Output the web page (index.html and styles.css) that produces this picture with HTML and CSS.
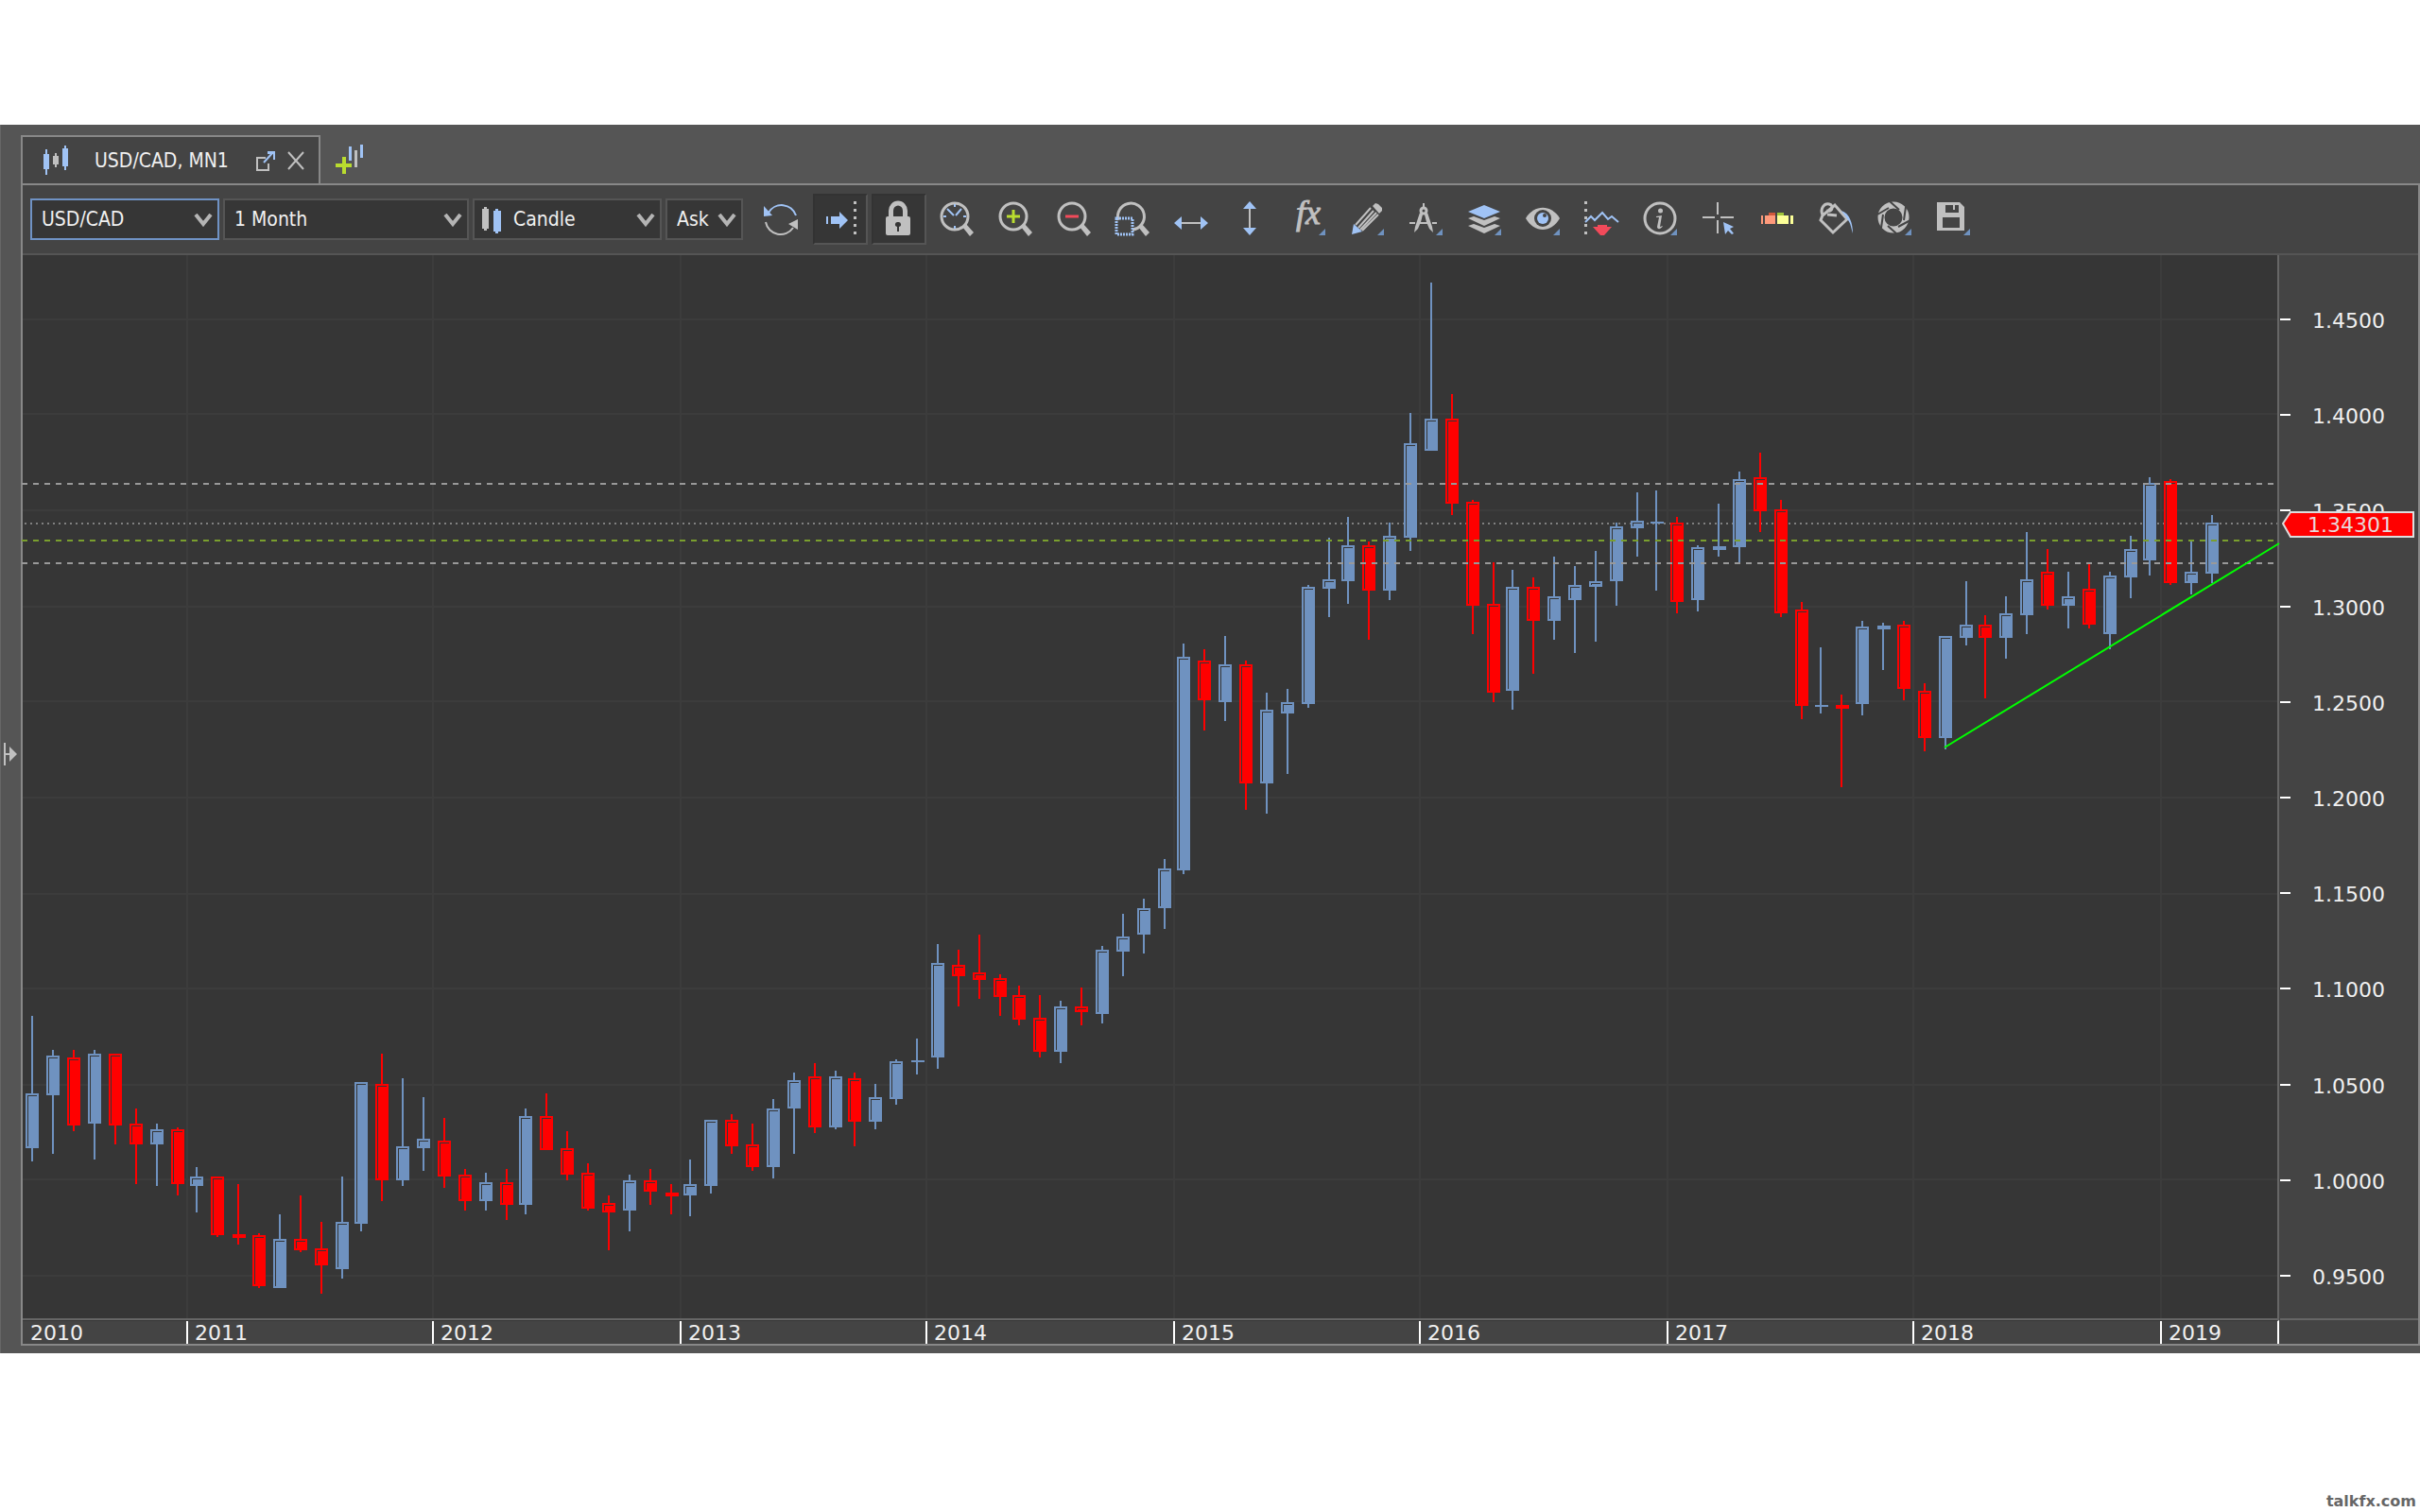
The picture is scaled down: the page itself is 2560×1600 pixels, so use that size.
FILE: index.html
```html
<!DOCTYPE html>
<html lang="en">
<head>
<meta charset="utf-8">
<title>USD/CAD, MN1</title>
<link rel="stylesheet" href="styles.css">
</head>
<body>
<main class="window">
  <nav class="tabs">
    <div class="tab">
      <svg class="tab-icon" width="26" height="32" viewBox="46 155 26 32" aria-hidden="true">
        <g class="blue-fill"><rect x="46" y="164" width="6" height="16"/><rect x="48" y="159" width="2" height="27"/><rect x="66" y="158" width="6" height="19"/><rect x="68" y="155" width="2" height="26"/></g>
        <g class="grey-fill"><rect x="56" y="166" width="6" height="9"/><rect x="58" y="163" width="2" height="15"/></g>
      </svg>
      <span class="tab-title">USD/CAD, MN1</span>
      <button class="tab-button" type="button" aria-label="Detach">
        <svg width="20" height="22" viewBox="270 157 20 22"><path class="grey-line" d="M280 165h-9v13h12v-7"/><path class="blue-line" d="M278 170l10-11"/><path class="blue-fill" d="M282 158h8v9h-2v-6h-6z"/></svg>
      </button>
      <button class="tab-button close" type="button" aria-label="Close">
        <svg width="18" height="20" viewBox="303 160 18 20"><path class="grey-line" d="M304 161l16 18M320 161l-16 18"/></svg>
      </button>
    </div>
    <button class="tab-button new-chart" type="button" aria-label="New chart">
      <svg width="30" height="32" viewBox="355 152 30 32"><path class="lime-fill" d="M362 165h4v7h6v4h-6v7h-4v-7h-7v-4h7z"/><path class="blue-fill" d="M369 154h3v15h-3zM381 152h3v14h-3z"/><path class="grey-fill" d="M375 158h3v18h-3z"/></svg>
    </button>
  </nav>

  <div class="body">
    <button class="splitter" type="button" aria-label="Expand panel">
      <svg width="14" height="24" viewBox="0 0 14 24"><path class="grey-fill" d="M0 0h2v11h4V4l8 8-8 8v-7H2v11H0z"/></svg>
    </button>
    <section class="panel">
      <div class="toolbar">
        <div class="field instrument">
          <select aria-label="Instrument"><option>USD/CAD</option></select>
          <svg class="chevron" width="20" height="14" viewBox="0 0 20 14"><path d="M2 1l8 10 8-10"/></svg>
        </div>
        <div class="field period">
          <select aria-label="Period"><option>1 Month</option></select>
          <svg class="chevron" width="20" height="14" viewBox="0 0 20 14"><path d="M2 1l8 10 8-10"/></svg>
        </div>
        <div class="field style">
          <svg class="style-icon" width="20" height="30" viewBox="510 218 20 30"><path class="grey-fill" d="M510 221h2v-2h3v2h2v21h-2v2h-3v-2h-2z"/><path class="blue-fill" d="M522 223h2v-2h3v2h3v22h-3v2h-3v-2h-2z"/></svg>
          <select aria-label="Chart type"><option>Candle</option></select>
          <svg class="chevron" width="20" height="14" viewBox="0 0 20 14"><path d="M2 1l8 10 8-10"/></svg>
        </div>
        <div class="field side">
          <select aria-label="Price side"><option>Ask</option></select>
          <svg class="chevron" width="20" height="14" viewBox="0 0 20 14"><path d="M2 1l8 10 8-10"/></svg>
        </div>
        <div class="tools">
          <button type="button" aria-label="Refresh"><svg viewBox="0 0 38 38"><path class="blue-line" d="M5 12a16 16 0 0 1 29 3"/><path class="blue-fill" d="M0 5v11l9-1z"/><path class="grey-line" d="M2 22a16 16 0 0 0 29 6"/><path class="grey-fill" d="M36 30V19l-10 5z"/></svg></button>
          <button type="button" class="on" aria-label="Autoshift" aria-pressed="true"><svg viewBox="0 0 38 38"><path class="blue-fill" d="M4 16h2v8H4zM9 16h9v-5l9 9-9 9v-5H9z"/><path class="grey-fill" d="M33 0h3v3h-3zM33 8h3v3h-3zM33 16h3v3h-3zM33 24h3v3h-3zM33 32h3v3h-3z"/></svg></button>
          <button type="button" class="on" aria-label="Lock" aria-pressed="true"><svg viewBox="0 0 38 38"><path class="grey-line thick" d="M10.500 17v-7a7.500 8 0 0 1 15 0v7"/><path class="grey-fill" fill-rule="evenodd" d="M7 16h22a2 2 0 0 1 2 2v16a2 2 0 0 1-2 2H7a2 2 0 0 1-2-2V18a2 2 0 0 1 2-2zm11 6a2.500 2.500 0 0 0-1 5v5h2v-5a2.500 2.500 0 0 0-1-5z"/></svg></button>
          <button type="button" aria-label="Zoom time"><svg viewBox="0 0 38 38"><circle class="grey-line lens" cx="16" cy="16" r="14"/><path class="grey-fill" d="M24 27l4-3 8 9-4 4z"/><path class="blue-line" d="M8 8l7 7M23 8l-6 7M16 3v3M16 26v3M4 16h3M25 16h3"/></svg></button>
          <button type="button" aria-label="Zoom in"><svg viewBox="0 0 38 38"><circle class="grey-line lens" cx="16" cy="16" r="14"/><path class="grey-fill" d="M24 27l4-3 8 9-4 4z"/><path class="lime-fill" d="M14.500 9h3v5.500H23v3h-5.500V23h-3v-5.500H9v-3h5.500z"/></svg></button>
          <button type="button" aria-label="Zoom out"><svg viewBox="0 0 38 38"><circle class="grey-line lens" cx="16" cy="16" r="14"/><path class="grey-fill" d="M24 27l4-3 8 9-4 4z"/><path class="coral-fill" d="M9 14.500h14v3H9z"/></svg></button>
          <button type="button" aria-label="Zoom to area"><svg viewBox="0 0 38 38"><path class="grey-line lens" d="M3 20a14 14 0 1 1 15 10"/><path class="grey-fill" d="M24 27l4-3 8 9-4 4z"/><rect class="blue-line dotted" x="1" y="18" width="17" height="17"/></svg></button>
          <button type="button" aria-label="Fit horizontally"><svg viewBox="0 0 38 38"><path class="grey-line" d="M7 23h22"/><path class="blue-fill" d="M0 23l8-7v14zM36 23l-8-7v14z"/></svg></button>
          <button type="button" aria-label="Fit vertically"><svg viewBox="0 0 38 38"><path class="grey-line" d="M18 7v22"/><path class="blue-fill" d="M18 0l7 8H11zM18 36l7-8H11z"/></svg></button>
          <button type="button" aria-label="Indicators"><svg viewBox="0 0 38 38"><text class="fx" x="5" y="24">fx</text><path class="corner" d="M36 29v7h-7z"/></svg></button>
          <button type="button" aria-label="Draw"><svg viewBox="0 0 38 38"><path class="grey-fill" d="M24 5l3-3 3 1 4 4v3l-3 3z"/><path class="grey-line" d="M22 7L6 25M30 14L13 31M25 10L9 28M28 12L11 30"/><path class="blue-fill" d="M4 24l9 8-11 3z"/><path class="corner" d="M36 29v7h-7z"/></svg></button>
          <button type="button" aria-label="Measure"><svg viewBox="0 0 38 38"><path class="grey-line" d="M16 2v5M1 23h6M12 23h8M25 23h5"/><circle class="grey-line mid" cx="16" cy="10" r="3"/><path class="grey-fill" d="M12 12l3 2-2 8-3 7-4 4 1-6zM20 12l-3 2 2 8 3 7 4 4-1-6z"/><path class="corner" d="M36 29v7h-7z"/></svg></button>
          <button type="button" aria-label="Layers"><svg viewBox="0 0 38 38"><path class="blue-fill" d="M18 4l17 7-17 7L1 11z"/><path class="grey-fill" d="M1 18l6-2 11 4 11-4 6 2-17 8zM1 26l6-2 11 4 11-4 6 2-17 8z"/><path class="corner" d="M36 29v7h-7z"/></svg></button>
          <button type="button" aria-label="Visibility"><svg viewBox="0 0 38 38"><path class="grey-fill" d="M0 18C9 3 27 3 36 18 27 34 9 34 0 18z"/><circle class="hole" cx="18" cy="18" r="9"/><circle class="blue-fill" cx="18" cy="18" r="6"/><circle class="hole" cx="20" cy="15" r="2"/><path class="corner" d="M36 29v7h-7z"/></svg></button>
          <button type="button" aria-label="Trade levels"><svg viewBox="0 0 38 38"><path class="grey-fill" d="M0 0h3v3H0zM0 8h3v3H0zM0 16h3v3H0zM0 24h3v3H0zM0 32h3v3H0z"/><path class="blue-line" d="M1 22l6-6 4 4 8-8 6 7 4-3 7 6"/><path class="coral-fill" d="M9 27h5v-2h10v2h5l-8 9h-4z"/></svg></button>
          <button type="button" aria-label="Information"><svg viewBox="0 0 38 38"><circle class="grey-line lens" cx="18" cy="18" r="16"/><circle class="grey-fill" cx="18.500" cy="10" r="2.500"/><path class="grey-fill" d="M14 16l6-1-2 12 3-1c-2 4-6 4-6 1l2-10h-3z"/><path class="corner" d="M36 29v7h-7z"/></svg></button>
          <button type="button" aria-label="Crosshair"><svg viewBox="0 0 38 38"><path class="grey-line" d="M17 1v13M17 20v14M1 17h13M20 17h14"/><path class="blue-fill" d="M23 22l11 5-4 2 4 5-2 1-4-4-3 4z"/></svg></button>
          <button type="button" aria-label="Color scheme"><svg viewBox="0 0 38 38"><path fill="#ff9a7b" d="M1 15h2v9H1zM5 15h11v9H5z"/><path fill="#d0583c" d="M9 12h7v3H9z"/><path fill="#fcff98" d="M18 15h12v9H18zM32 15h3v9h-3z"/><path fill="#9ec43a" d="M18 12h7v3h-7z"/></svg></button>
          <button type="button" aria-label="Fill"><svg viewBox="0 0 38 38"><path class="grey-line mid" d="M4 15L17 4l13 15-15 14L2 20zM4 15c-3-8 2-13 7-12 5 1 4 9-3 7M9 14l10 1"/><path class="blue-fill" d="M24 10c9 3 12 14 12 24-2-6-2-10-5-14z"/></svg></button>
          <button type="button" aria-label="Snapshot"><svg viewBox="0 0 38 38"><circle class="grey-line iris" cx="17" cy="17" r="13"/><path class="cut" d="M13 0l10 9M30 6l-2 14M35 20l-13 7M21 35L11 26M4 28l2-14M0 14l12-7"/><path class="corner" d="M36 29v7h-7z"/></svg></button>
          <button type="button" aria-label="Save"><svg viewBox="0 0 38 38"><path class="grey-fill" fill-rule="evenodd" d="M1 1h24l5 5v25H1zM10 4v8h14V4h-4v5h-2V4zM7 17v11h18V17z"/><path class="corner" d="M36 29v7h-7z"/></svg></button>
        </div>
      </div>

      <div class="chart">
        <div class="plot">
          <svg id="plot" viewBox="24 270 2385 1125" preserveAspectRatio="none" role="img" aria-label="USD/CAD monthly candles">
            <g id="grid"></g>
            <path class="dots" d="M24 554H2409"/>
            <g id="candles"></g>
            <path class="dash" d="M23 512H2406M23 596H2406"/>
            <path class="dash pivot" d="M23 572H2406"/>
            <path class="trend" d="M2057 791L2411 575"/>
          </svg>
        </div>
        <div class="prices">
          <ul>
            <li>1.4500</li><li>1.4000</li><li>1.3500</li><li>1.3000</li><li>1.2500</li><li>1.2000</li><li>1.1500</li><li>1.1000</li><li>1.0500</li><li>1.0000</li><li>0.9500</li>
          </ul>
          <div class="tag">
            <svg width="140" height="28" viewBox="0 0 140 28" aria-hidden="true"><path d="M1 13L9 1h130v26H9z"/></svg>
            <span>1.34301</span>
          </div>
        </div>
        <ol class="years">
          <li>2010</li><li>2011</li><li>2012</li><li>2013</li><li>2014</li><li>2015</li><li>2016</li><li>2017</li><li>2018</li><li>2019</li>
        </ol>
      </div>
    </section>
  </div>
</main>
<footer class="credit">talkfx.com</footer>
<script src="chart.js"></script>
</body>
</html>
```

FILE: styles.css
```css
* { box-sizing: border-box; }

body {
  margin: 0;
  min-height: 100vh;
  display: flex;
  flex-direction: column;
  padding-top: 132px;
  background: #fff;
  color: #f0f0f0;
  font-family: "DejaVu Sans Condensed", "DejaVu Sans", sans-serif;
  font-size: 21px;
}

button, select { font: inherit; color: inherit; }
button { padding: 0; border: 0; background: none; }
svg { display: block; }
ul, ol { margin: 0; padding: 0; list-style: none; }

.blue-fill { fill: #a0c3f5; }
.grey-fill { fill: #c0c0c0; }
.lime-fill { fill: #b9dc2f; }
.coral-fill { fill: #f24a5a; }
.hole { fill: #444; }
.corner { fill: #6f92c0; }
.blue-line, .grey-line { fill: none; stroke-width: 2; }
.blue-line { stroke: #a0c3f5; }
.grey-line { stroke: #c0c0c0; }
.mid { stroke-width: 3; }
.lens { stroke-width: 3; }
.thick { stroke-width: 5; }
.iris { stroke-width: 7; }
.cut { fill: none; stroke: #444; stroke-width: 2; }
.dotted { stroke-width: 3; stroke-dasharray: 2 1; }
.fx { fill: #c0c0c0; stroke: #c0c0c0; font: italic 36px "Liberation Serif", serif; }

.window {
  display: flex;
  flex-direction: column;
  padding-bottom: 8px;
  border-left: 1px solid #666;
  background: #555;
}

.tabs {
  display: flex;
  align-items: stretch;
  height: 62px;
  padding: 11px 0 0 21px;
}
.tab {
  display: flex;
  align-items: center;
  width: 317px;
  padding-left: 22px;
  border: 2px solid #888;
  border-bottom: 0;
  background: #444;
}
.tab-title { flex: 1; padding-left: 28px; }
.close { margin: 0 15px 0 13px; }
.new-chart { margin-left: 16px; }

.body { display: flex; }
.splitter { width: 21px; padding: 0 0 22px 3px; }
.panel {
  flex: 1;
  min-width: 0;
  border: 2px solid #888;
}

.toolbar {
  display: flex;
  align-items: center;
  gap: 4px;
  height: 74px;
  padding: 0 8px;
  border-bottom: 2px solid #555;
  background: #444;
}
.field { position: relative; height: 44px; }
.field select {
  width: 100%;
  height: 100%;
  padding: 0 10px;
  appearance: none;
  border: 2px solid #555;
  border-radius: 0;
  background: #363636;
}
.field.instrument { width: 200px; }
.field.instrument select { border-color: #6f92c4; }
.field.period { width: 260px; }
.field.style { width: 200px; }
.field.style select { padding-left: 41px; }
.field.side { width: 82px; }
.chevron { position: absolute; right: 7px; top: 16px; pointer-events: none; }
.chevron path { fill: none; stroke: #b4b4b4; stroke-width: 4; }
.style-icon { position: absolute; left: 10px; top: 8px; }

.tools { display: flex; gap: 4px; margin-left: 8px; }
.tools button {
  display: flex;
  align-items: center;
  justify-content: center;
  width: 58px;
  height: 54px;
}
.tools svg { width: 38px; height: 38px; overflow: visible; }
.tools .on {
  border: 2px solid #555;
  border-top-color: #333;
  border-left-color: #333;
  background: #363636;
}

.chart {
  display: grid;
  grid-template-columns: minmax(0, 1fr) 146px;
  background: #444;
  font-family: "DejaVu Sans", sans-serif;
  font-size: 22px;
}
.plot {
  margin-right: 1px;
  border-right: 2px solid #666;
  border-bottom: 2px solid #666;
  background: #363636;
}
.plot svg { width: 100%; aspect-ratio: 2385 / 1125; overflow: visible; }
.prices {
  position: relative;
  border-bottom: 2px solid #666;
}
.prices ul {
  display: flex;
  flex-direction: column;
  justify-content: space-between;
  height: 100%;
  padding: 57px 0 30px;
}
.prices li {
  display: flex;
  align-items: center;
  gap: 23px;
  line-height: 26px;
}
.prices li::before { content: ""; width: 11px; height: 2px; margin-bottom: 4px; background: #fff; }
.tag { position: absolute; left: 2px; top: 271px; width: 140px; }
.tag path { fill: #f00; stroke: #ddd; stroke-width: 2; }
.tag span { position: absolute; left: 27px; top: 2px; line-height: 26px; color: #e8d8d8; }

.years {
  display: grid;
  grid-template-columns: 173fr 260fr 262fr 260fr 262fr 260fr 262fr 260fr 262fr 124fr;
  margin-right: 1px;
  border-top: 1px solid #363636;
  border-right: 2px solid #fff;
}
.years li { height: 24px; padding-left: 7px; line-height: 26px; border-left: 2px solid #fff; }
.years li:first-child { padding-left: 8px; border-left: 0; }

#grid { fill: #3c3c3c; }
#candles .up { fill: #6f92c0; }
#candles .down { fill: #f00; }
#candles .bevel { fill: none; stroke: #363636; stroke-width: 1; }
#plot { shape-rendering: crispEdges; }
.dots { stroke: #808080; stroke-width: 2; stroke-dasharray: 2 4; stroke-dashoffset: 4; }
.dash { stroke: #999; stroke-width: 2; stroke-dasharray: 6 6; }
.pivot { stroke: #7a9f2e; }
.trend { stroke: #0f0; stroke-width: 2; shape-rendering: auto; }

.credit {
  margin-top: auto;
  padding: 0 4px 2px;
  color: #666;
  font: bold 16px/19px "DejaVu Sans", sans-serif;
  text-align: right;
}
```

FILE: chart.js
```js
// One row per month: x, high, body top, body bottom, low, direction (1 up, 0 down)
const candles = [
  [27,1075,1157,1215,1229,1],[49,1111,1117,1159,1221,1],[71,1111,1119,1191,1197,0],[93,1111,1115,1189,1227,1],
  [115,1115,1115,1191,1211,0],[137,1173,1189,1211,1253,0],[159,1189,1195,1211,1255,1],[181,1193,1195,1253,1265,0],
  [201,1235,1245,1255,1283,1],[223,1245,1245,1307,1309,0],[245,1253,1306,1310,1317,0],[267,1305,1307,1361,1363,0],
  [289,1285,1311,1363,1363,1],[311,1265,1311,1323,1325,0],[333,1293,1321,1339,1369,0],[355,1245,1293,1343,1353,1],
  [375,1145,1145,1295,1303,1],[397,1115,1147,1249,1271,0],[419,1141,1213,1249,1255,1],[441,1161,1205,1215,1239,1],
  [463,1183,1207,1245,1257,0],[485,1237,1243,1271,1281,0],[507,1241,1251,1271,1281,1],[529,1237,1251,1275,1291,0],
  [549,1173,1181,1275,1285,1],[571,1157,1181,1217,1217,0],[593,1197,1215,1243,1249,0],[615,1231,1241,1279,1281,0],
  [637,1265,1273,1283,1323,0],[659,1243,1249,1281,1303,1],[681,1237,1249,1261,1275,0],[703,1253,1262,1266,1285,0],
  [723,1227,1253,1265,1287,1],[745,1185,1185,1255,1263,1],[767,1179,1185,1213,1221,0],[789,1189,1211,1235,1239,0],
  [811,1163,1173,1235,1247,1],[833,1135,1143,1173,1221,1],[855,1125,1139,1193,1199,0],[877,1133,1139,1193,1195,1],
  [897,1135,1141,1187,1213,0],[919,1147,1161,1187,1195,1],[941,1121,1123,1163,1169,1],[963,1099,1122,1124,1137,1],
  [985,999,1019,1119,1131,1],[1007,1005,1021,1033,1065,0],[1029,989,1029,1037,1057,0],[1051,1031,1035,1055,1075,0],
  [1071,1043,1053,1079,1085,0],[1093,1053,1077,1113,1119,0],[1115,1059,1065,1113,1125,1],[1137,1045,1065,1071,1085,0],
  [1159,1001,1005,1073,1083,1],[1181,967,991,1007,1033,1],[1203,951,961,989,1009,1],[1225,909,919,961,983,1],
  [1245,681,695,921,925,1],[1267,687,699,741,773,0],[1289,673,703,743,763,1],[1311,699,703,829,857,0],
  [1333,733,751,829,861,1],[1355,729,743,755,819,1],[1377,619,621,745,749,1],[1399,569,613,623,653,1],
  [1419,547,577,615,639,1],[1441,573,577,625,677,0],[1463,553,567,625,635,1],[1485,437,469,569,583,1],
  [1507,299,443,477,477,1],[1529,417,443,533,545,0],[1551,529,531,641,671,0],[1573,595,639,733,743,0],
  [1593,603,621,731,751,1],[1615,611,621,657,713,0],[1637,589,631,657,677,1],[1659,599,619,635,691,1],
  [1681,583,615,621,679,1],[1703,553,557,615,641,1],[1725,521,551,559,589,1],[1745,519,552,554,625,1],
  [1767,547,553,637,649,0],[1789,577,579,635,647,1],[1811,533,578,582,589,1],[1833,499,507,579,597,1],
  [1855,479,505,541,563,0],[1877,529,539,649,653,0],[1899,637,645,747,761,0],[1919,685,746,748,755,1],
  [1941,735,746,750,833,0],[1963,657,663,745,757,1],[1985,659,662,666,709,1],[2007,657,661,729,741,0],
  [2029,723,731,781,795,0],[2051,673,673,781,793,1],[2073,615,661,675,683,1],[2093,651,661,675,739,0],
  [2115,631,649,675,697,1],[2137,563,613,651,671,1],[2159,581,605,641,645,0],[2181,605,631,641,665,1],
  [2203,597,623,661,665,0],[2225,605,609,671,687,1],[2247,567,581,611,633,1],[2267,505,511,593,609,1],
  [2289,507,509,617,619,0],[2311,573,605,617,629,1],[2333,545,553,607,617,1]
];
const rows = [338, 438, 540, 642, 742, 844, 946, 1046, 1148, 1248, 1350];
const columns = [198, 458, 720, 980, 1242, 1502, 1764, 2024, 2286];

const rect = (x, y, w, h, cls) => `<rect class="${cls}" x="${x}" y="${y}" width="${w}" height="${h}"/>`;

document.getElementById("grid").innerHTML =
  rows.map(y => rect(24, y - 1, 2385, 2, "row")).join("") +
  columns.map(x => rect(x - 1, 270, 2, 1125, "column")).join("");

document.getElementById("candles").innerHTML = candles.map(([x, high, top, bottom, low, up]) => {
  const cls = up ? "up" : "down";
  const flat = bottom - top < 5;
  let out = rect(x + 6, high, 2, low - high, cls) + rect(flat ? x + 1 : x, top, 14, bottom - top, cls);
  if (!flat) {
    out += `<path class="bevel" d="M${x + 2.5} ${bottom - 2}V${top + 2.5}H${x + 12}"/>`;
  }
  return out;
}).join("");
```
